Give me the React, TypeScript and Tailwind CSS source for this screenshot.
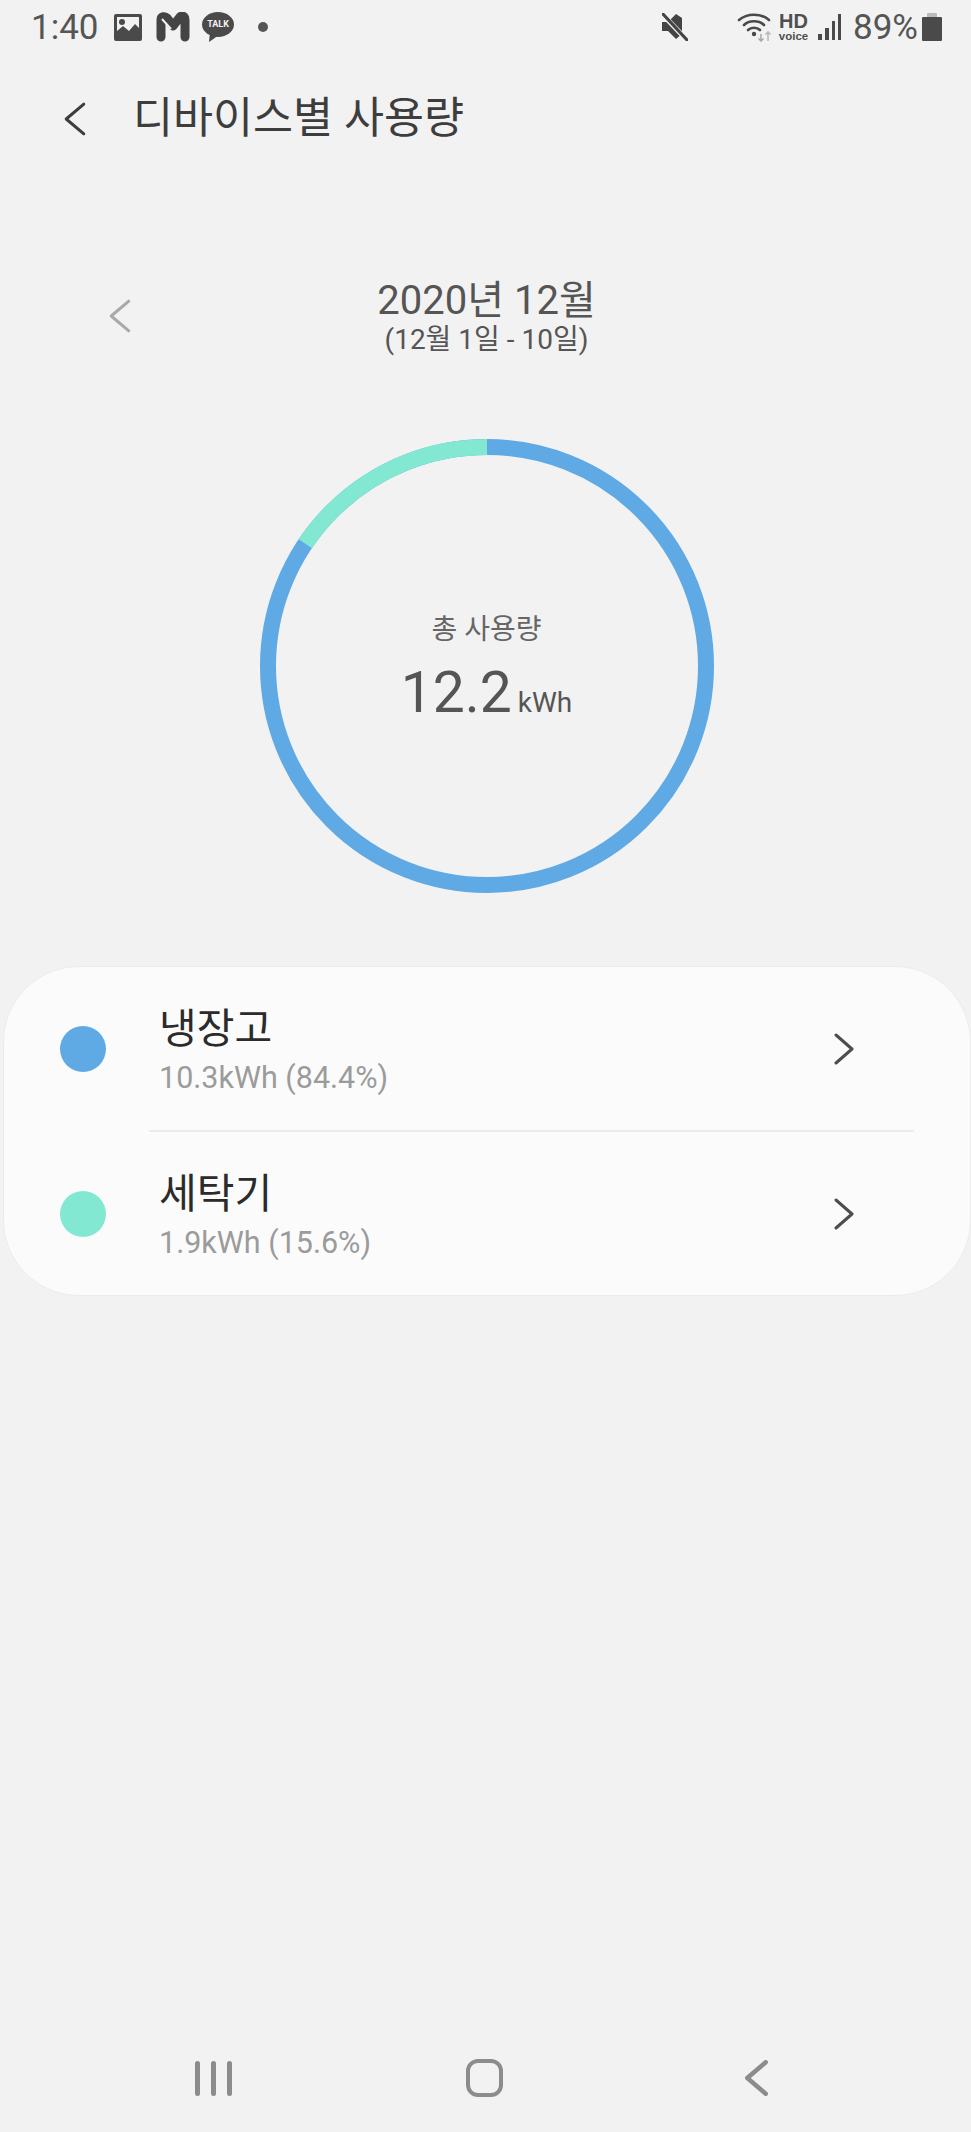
const FONT = "font-['Roboto','Noto_Sans_CJK_KR',sans-serif]";

function Chevron({ dir, className, stroke, width = 3 }: { dir: 'left' | 'right'; className: string; stroke: string; width?: number }) {
  return (
    <svg viewBox="0 0 20 32" className={className} fill="none" stroke={stroke} strokeWidth={width} strokeLinecap="round" strokeLinejoin="round" preserveAspectRatio="none">
      <path d={dir === 'left' ? 'M18 2 L2 16 L18 30' : 'M2 2 L18 16 L2 30'} vectorEffect="non-scaling-stroke" />
    </svg>
  );
}

function StatusBar() {
  return (
    <div className="h-[54px] flex items-center justify-between pl-[31px] pr-[29px] text-[#555]">
      <div className="flex items-center">
        <span className="text-[35px] leading-none w-[83px]">1:40</span>
        {/* gallery */}
        <svg viewBox="0 0 28 27" className="w-[28px] h-[27px]">
          <path fillRule="evenodd" fill="#4a4a4a" d="M2 0h24a2 2 0 0 1 2 2v23a2 2 0 0 1-2 2H2a2 2 0 0 1-2-2V2a2 2 0 0 1 2-2zM3 3v14l6-5 6 5 6-7 4 4V3zM8 5a3 3 0 1 1 0 6 3 3 0 0 1 0-6z" />
        </svg>
        {/* M */}
        <svg viewBox="0 0 34 30" className="w-[34px] h-[30px] ml-[14px]">
          <path d="M5 25 V8 C5 4 9 4 11 6 L17 14 L24 5 C26 3 29 4 29 8 V25" fill="none" stroke="#444" strokeWidth="9" strokeLinecap="round" strokeLinejoin="round" />
          <path d="M6 7 L15 17" stroke="#f2f2f2" strokeWidth="2" />
        </svg>
        {/* talk */}
        <div className="relative w-[32px] h-[30px] ml-[12px]">
          <svg viewBox="0 0 32 30" className="w-[32px] h-[30px]">
            <ellipse cx="16" cy="12.5" rx="16" ry="12.5" fill="#4a4a4a" />
            <path d="M8 20 L7 30 L17 23 Z" fill="#4a4a4a" />
          </svg>
          <span className="absolute left-0 right-0 top-[7px] text-center text-[9px] leading-[11px] font-bold text-[#f2f2f2]">TALK</span>
        </div>
        <div className="w-[10px] h-[10px] rounded-full bg-[#555] ml-[24px]" />
      </div>
      <div className="flex items-center">
        {/* mute */}
        <svg viewBox="0 0 26 28" className="w-[26px] h-[28px]">
          <path d="M0 9h6l8-8 6 4v16l-6 5-8-8H0z" fill="#444" />
          <path d="M2 3 L24 26" stroke="#f2f2f2" strokeWidth="5" />
          <path d="M1 1 L25 27" stroke="#444" strokeWidth="3" strokeLinecap="round" />
        </svg>
        {/* wifi */}
        <svg viewBox="0 0 34 30" className="w-[34px] h-[30px] ml-[49px]">
          <g fill="none" stroke="#4a4a4a" strokeWidth="2.6" strokeLinecap="round">
            <path d="M2 8 C10 1 24 1 32 8" />
            <path d="M7 13 C12 8 22 8 27 13" />
            <path d="M11 18 C14 15 20 15 23 18" />
          </g>
          <circle cx="17" cy="22" r="2.2" fill="#4a4a4a" />
          <path d="M24 22v7M21.5 26.5L24 29l2.5-2.5" stroke="#aaa" strokeWidth="1.6" fill="none" />
          <path d="M31 29v-9M28.5 22.5L31 20l2.5 2.5" stroke="#bbb" strokeWidth="1.6" fill="none" />
        </svg>
        <div className="flex flex-col items-center ml-[7px] w-[31px] text-[#4f4f4f] font-bold">
          <span className="text-[20px] leading-[18px] font-['Liberation_Sans',sans-serif]">HD</span>
          <span className="text-[11.5px] leading-[12px] font-['Liberation_Sans',sans-serif]">voice</span>
        </div>
        {/* signal */}
        <div className="flex items-end gap-[3px] h-[26px] ml-[9px]">
          <div className="w-[4px] h-[6px] bg-[#4a4a4a]" />
          <div className="w-[4px] h-[12px] bg-[#4a4a4a]" />
          <div className="w-[3px] h-[19px] bg-[#4a4a4a]" />
          <div className="w-[3px] h-[26px] bg-[#4a4a4a]" />
        </div>
        <span className="text-[35px] leading-none ml-[12px]">89%</span>
        {/* battery */}
        <div className="flex flex-col items-center ml-[4px]">
          <div className="w-[10px] h-[4px] bg-[#bbb] rounded-t-[1px]" />
          <div className="w-[20px] h-[24px] bg-[#4a4a4a] rounded-[1px]" />
        </div>
      </div>
    </div>
  );
}

function Ring() {
  const r = 219;
  const c = 2 * Math.PI * r;
  const mint = c * 0.156;
  return (
    <div className="relative w-[454px] h-[454px]">
      <svg viewBox="0 0 454 454" className="w-full h-full -rotate-90">
        <circle cx="227" cy="227" r={r} fill="none" stroke="#5fa9e5" strokeWidth="16" />
        <circle cx="227" cy="227" r={r} fill="none" stroke="#82e8d2" strokeWidth="16" strokeDasharray={`${mint} ${c - mint}`} strokeDashoffset={mint} />
      </svg>
      <div className="absolute inset-0 flex flex-col items-center text-[#555]">
        <div className="text-[28px] leading-[30px] mt-[176px] text-[#666]">총 사용량</div>
        <div className="flex items-baseline mt-[16px]">
          <span className="text-[57px] leading-[64px]">12.2</span>
          <span className="text-[28px] leading-none ml-[6px]">kWh</span>
        </div>
      </div>
    </div>
  );
}

function DeviceRow({ color, name, usage }: { color: string; name: string; usage: string }) {
  return (
    <div className="h-[163px] flex items-center pl-[56px] pr-[116px]">
      <div className={`w-[46px] h-[46px] rounded-full ${color}`} />
      <div className="ml-[53px] flex-1 pt-[4px]">
        <div className="text-[41px] leading-[46px] text-[#2b2b2b]">{name}</div>
        <div className="text-[30.5px] leading-[34px] mt-[9px] text-[#9b9b9b]">{usage}</div>
      </div>
      <Chevron dir="right" className="w-[20px] h-[32px]" stroke="#4d4d4d" />
    </div>
  );
}

export default function App() {
  return (
    <div className={`w-[971px] h-[2132px] bg-[#f2f2f2] flex flex-col overflow-hidden ${FONT}`}>
      <StatusBar />

      {/* header */}
      <div className="h-[64px] mt-[33px] flex items-center pl-[64px]">
        <Chevron dir="left" className="w-[22px] h-[34px]" stroke="#3d3d3d" />
        <h1 className="text-[43.5px] leading-none ml-[47px] text-[#3d3d3d]">디바이스별 사용량</h1>
      </div>

      {/* month */}
      <div className="relative mt-[148px] flex flex-col items-center pl-[2px] text-[#555]">
        <div className="absolute left-[109px] top-[0px]">
          <Chevron dir="left" className="w-[22px] h-[34px]" stroke="#a9a9a9" />
        </div>
        <div className="text-[40px] leading-[44px] mt-[-20px]">2020년 12월</div>
        <div className="text-[28px] leading-[32px] mt-[1px]">(12월 1일 - 10일)</div>
      </div>

      <div className="flex justify-center mt-[83px] pl-[2px]">
        <Ring />
      </div>

      {/* devices */}
      <div className="ml-[3px] mt-[73px] rounded-[76px] border border-[#ececec] bg-[#fbfbfb] flex flex-col">
        <DeviceRow color="bg-[#5fa9e5]" name="냉장고" usage="10.3kWh (84.4%)" />
        <div className="h-[2px] bg-[#ececec] ml-[145px] mr-[56px]" />
        <DeviceRow color="bg-[#82e8d2]" name="세탁기" usage="1.9kWh (15.6%)" />
      </div>

      {/* nav bar */}
      <div className="mt-auto mb-[35px] h-[38px] flex items-center pl-[195px]">
        <div className="flex gap-[11px]">
          <div className="w-[5px] h-[35px] rounded-full bg-[#8c8c8c]" />
          <div className="w-[5px] h-[35px] rounded-full bg-[#8c8c8c]" />
          <div className="w-[5px] h-[35px] rounded-full bg-[#8c8c8c]" />
        </div>
        <div className="w-[37px] h-[38px] rounded-[12px] border-[4px] border-[#8c8c8c] ml-[234px]" />
        <Chevron dir="left" className="ml-[242px] w-[23px] h-[36px]" stroke="#8c8c8c" width={4.5} />
      </div>
    </div>
  );
}
